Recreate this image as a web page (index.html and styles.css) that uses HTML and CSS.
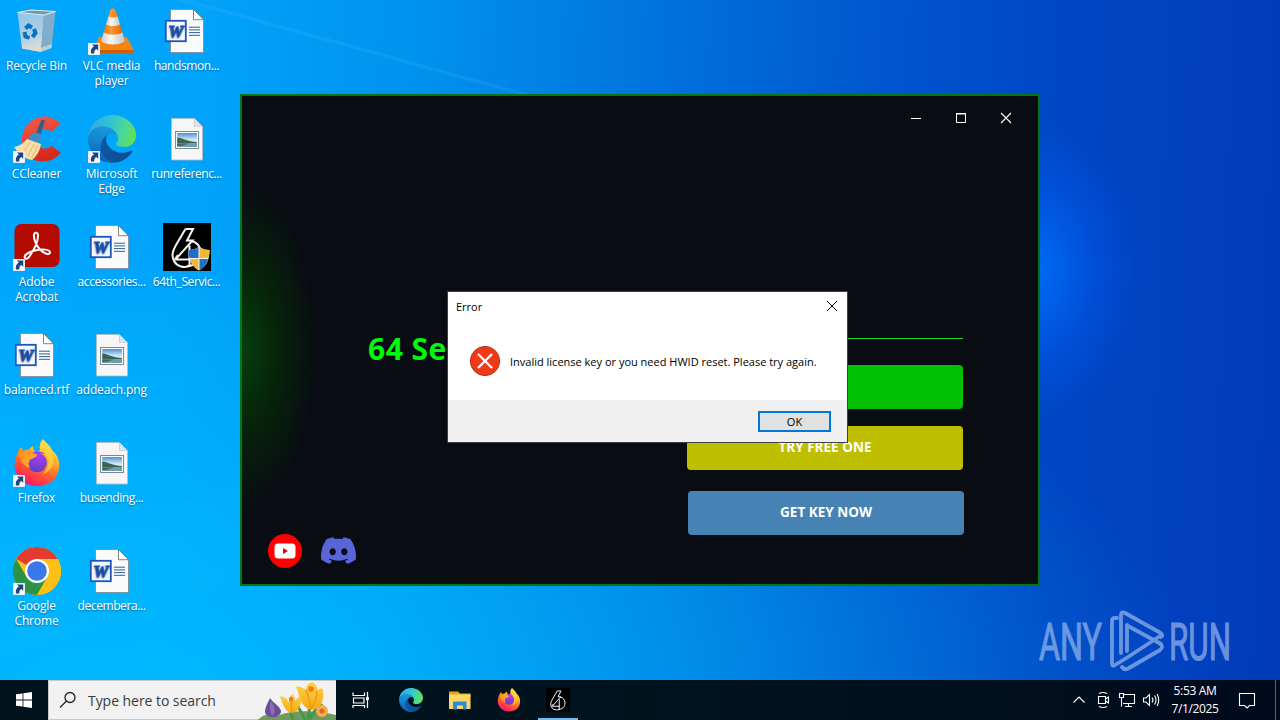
FILE: index.html
```html
<!DOCTYPE html>
<html lang="en">
<head>
    <meta charset="UTF-8">
    <meta name="viewport" content="width=device-width, initial-scale=1.0">
    <title>Desktop</title>
    <link rel="stylesheet" href="styles.css">
</head>
<body>
    <!-- shared icons -->
    <svg class="defs" width="0" height="0">
        <defs>
            <linearGradient id="edgeA" x1="0" y1="0" x2="1" y2="0"><stop offset="0" stop-color="#0c59a4"/><stop offset="1" stop-color="#114a8b"/></linearGradient>
            <linearGradient id="edgeB" x1="0.6" y1="0" x2="0.4" y2="1"><stop offset="0" stop-color="#1b9de2"/><stop offset="0.5" stop-color="#1383d0"/><stop offset="1" stop-color="#0a5cb0"/></linearGradient>
            <linearGradient id="edgeC" x1="0" y1="0.4" x2="1" y2="0.6"><stop offset="0" stop-color="#35a9e3"/><stop offset="0.4" stop-color="#2fc2d6"/><stop offset="0.75" stop-color="#4bd894"/><stop offset="1" stop-color="#66e04e"/></linearGradient>
            <linearGradient id="fox" x1="0.8" y1="0" x2="0.3" y2="1"><stop offset="0" stop-color="#fff44f"/><stop offset="0.35" stop-color="#ffb02e"/><stop offset="0.6" stop-color="#ff6a2e"/><stop offset="0.85" stop-color="#ff2f50"/><stop offset="1" stop-color="#e31587"/></linearGradient>
            <linearGradient id="foxHead" x1="0" y1="0" x2="1" y2="1"><stop offset="0" stop-color="#ff8a16"/><stop offset="1" stop-color="#ffb636"/></linearGradient>
            <radialGradient id="foxGlobe" cx="0.6" cy="0.2" r="0.9"><stop offset="0" stop-color="#a93cf0"/><stop offset="1" stop-color="#5b3fc0"/></radialGradient>
            <linearGradient id="cone" x1="0" y1="0" x2="1" y2="0"><stop offset="0" stop-color="#e56a00"/><stop offset="0.4" stop-color="#ff9a2c"/><stop offset="1" stop-color="#d85f00"/></linearGradient>
            <linearGradient id="coneWhite" x1="0" y1="0" x2="1" y2="0"><stop offset="0" stop-color="#c9c9c9"/><stop offset="0.4" stop-color="#fafafa"/><stop offset="1" stop-color="#c2c2c2"/></linearGradient>
            <linearGradient id="binFront" x1="0" y1="0" x2="0.3" y2="1"><stop offset="0" stop-color="#8fc6ea"/><stop offset="0.6" stop-color="#a9cde3"/><stop offset="1" stop-color="#d5dadd"/></linearGradient>
            <linearGradient id="photo" x1="0" y1="0" x2="0" y2="1"><stop offset="0" stop-color="#4e92d8"/><stop offset="0.5" stop-color="#d5ebf7"/><stop offset="1" stop-color="#a9cfe4"/></linearGradient>
            <linearGradient id="ccRed" x1="0" y1="0" x2="0.3" y2="1"><stop offset="0" stop-color="#f4604b"/><stop offset="1" stop-color="#d42a1e"/></linearGradient>
            <linearGradient id="petal" x1="0" y1="0" x2="0" y2="1"><stop offset="0" stop-color="#ffd24a"/><stop offset="1" stop-color="#f5a911"/></linearGradient>
        </defs>
        <symbol id="arrow" viewBox="0 0 12 12">
            <rect width="12" height="12" fill="#f7f9fb" stroke="#b8c4d0" stroke-width="0.5"/>
            <path d="M4 1.500H10.200V7.800L8.300 6C6.600 7 6.200 8.200 6.300 10.500H3C2.300 7.300 3.500 5 5.900 3.500Z" fill="#1d4580"/>
        </symbol>
        <symbol id="word" viewBox="0 0 48 48">
            <path d="M7.500 2.500H30L40.500 13V45.500H7.500Z" fill="#fbfbfb" stroke="#7d8790" stroke-width="0.8"/>
            <path d="M30.500 2.500V12.700H40.500Z" fill="#fff" stroke="#6c7680" stroke-width="0.9"/>
            <path d="M26 20.200H37M26 22.900H37M26 25.600H37M26 28.300H37" stroke="#2f5d9c" stroke-width="1"/>
            <rect x="2.800" y="13.800" width="20" height="20.400" fill="#f4f8ff" stroke="#1c56b8" stroke-width="1.800"/>
            <text x="12.800" y="30" class="word-letter">W</text>
        </symbol>
        <symbol id="png" viewBox="0 0 48 48">
            <path d="M8.500 3.500H31.500L39.500 11.500V45H8.500Z" fill="#f6f6f6" stroke="#b5bcc2" stroke-width="0.8"/>
            <path d="M31.500 3.500V11.500H39.500Z" fill="#d9e6ee" stroke="#b5bcc2" stroke-width="0.6"/>
            <rect x="12.600" y="16.500" width="23" height="17" fill="#fff" stroke="#6e7b87" stroke-width="0.9"/>
            <rect x="14.200" y="18" width="19.800" height="14" fill="url(#photo)"/>
            <path d="M14.200 22.500C19 23 25 26.500 34 27.200V28.500H14.200Z" fill="#3d6352"/>
            <path d="M14.200 28.500H34V32H14.200Z" fill="#6f9cae"/>
            <path d="M14.200 28.500H26L18 31H14.200Z" fill="#44695f"/>
        </symbol>
        <symbol id="edge" viewBox="0 0 256 256">
            <g transform="translate(-4.63 -4.92)">
                <path fill="url(#edgeA)" d="M235.68 195.46a93.73 93.73 0 01-10.54 4.71 101.87 101.87 0 01-35.9 6.46c-47.32 0-88.54-32.55-88.54-74.32A31.48 31.48 0 01117.13 105c-42.8 1.8-53.8 46.4-53.8 72.53 0 73.88 68.09 81.37 82.76 81.37 7.91 0 19.84-2.3 27-4.56l1.31-.44a128.34 128.34 0 0066.6-52.8 4 4 0 00-5.32-5.64z"/>
                <path fill="url(#edgeB)" d="M110.34 246.34A79.2 79.2 0 0187.6 225a80.72 80.72 0 0129.53-120c3.12-1.47 8.45-4.13 15.54-4a32.35 32.35 0 0125.69 13 31.88 31.88 0 016.36 18.66c0-.21 24.46-79.6-80-79.6-43.9 0-80 41.66-80 78.21a130.15 130.15 0 0012.11 56 128 128 0 00156.38 67.11 75.55 75.55 0 01-62.78-8z"/>
                <path fill="url(#edgeC)" d="M156.94 153.78c-.81 1.05-3.3 2.5-3.3 5.66 0 2.61 1.7 5.12 4.72 7.23 14.38 10 41.49 8.68 41.56 8.68a59.56 59.56 0 0030.27-8.35 61.38 61.38 0 0030.43-52.88c.26-22.41-8-37.31-11.34-43.91C228.09 28.76 182.35 4.92 132.61 4.92a128 128 0 00-128 126.2c.48-36.54 36.8-66.05 80-66.05 3.5 0 23.46.34 42 10.07 16.34 8.58 24.9 18.94 30.85 29.21 6.18 10.67 7.28 24.15 7.28 29.52s-2.74 13.33-7.8 19.91z"/>
            </g>
        </symbol>
        <symbol id="firefox" viewBox="0 0 48 48">
            <path fill="url(#fox)" d="M30 0C33 4 37 6 39 11L42 14C45 18 47 23 46 29C45 40 36 47 24 47C11 47 2 38 1.500 26C1.500 20 4 15 6 11L8 8L10 12C12 11 14 10.500 16 11C17 9 18 8 20 7C20 10 21 12 23 13L27 11C26 7 27 3 30 0Z"/>
            <circle cx="24" cy="23.500" r="9.800" fill="url(#foxGlobe)"/>
            <path fill="url(#foxHead)" d="M6 9C7 12 9 13 12 12.500C14 11 18 11 20 13.500L24.500 15.500C24 18 20 19 17.500 20.500C15.500 22 15 26 17 29C10 27 5 19 6 9Z"/>
            <path fill="#ffd43e" d="M30 1C33 6 38 8 40 15C42 24 38 33 30 35C37 28 37 18 31 14C27 12 27 5 30 1Z" opacity="0.75"/>
            <path fill="#b833e1" d="M19.500 14C22 11.500 28 11.500 32 15C29 14 26 14.500 24.500 15.500Z"/>
        </symbol>
        <symbol id="chrome" viewBox="0 0 48 48">
            <circle cx="24" cy="24" r="24" fill="#fbc116"/>
            <path d="M24 24L3.200 12A24 24 0 0 1 44.800 12H24Z" fill="#e33b2e"/>
            <path d="M3.200 12A24 24 0 0 0 24 48L34.400 30L24 24L13.600 30Z" fill="#2b9246"/>
            <path d="M24 12H44.800A24 24 0 0 1 24 48L34.400 30Z" fill="#fbc116"/>
            <circle cx="24" cy="24" r="12" fill="#fff"/>
            <circle cx="24" cy="24" r="9.800" fill="#3a77e8"/>
        </symbol>
        <symbol id="logo64" viewBox="0 0 48 48">
            <rect width="48" height="48" fill="#000"/>
            <g fill="none" stroke="#f4f4f4" stroke-width="2" stroke-linejoin="miter">
                <path d="M22.500 6H30L24 17.500H29.500L12.500 36.500H26.500V22.500"/>
                <path d="M22.500 6L13 22C9 29 8.500 33 11 38C14 43.500 21 45.500 28 42.500"/>
                <path d="M28 18C34 19 38 24 38 30C38 38 32 43 24 43"/>
                <path d="M26.500 36V43M12 36L15 32"/>
            </g>
        </symbol>
    </svg>

    <div class="desktop">
        <svg class="rays" viewBox="0 0 1280 680">
            <path d="M190 0L530 94H516L176 0Z" fill="#4cc2ff" opacity="0.16"/>
            <path d="M0 545L240 487V584L0 660Z" fill="#19bcff" opacity="0.08"/>
        </svg>

        <div class="icons">
            <div class="icon">
                <svg viewBox="0 0 48 48">
                    <path d="M4.500 5.500L31 8L28 45L9 41.500Z" fill="url(#binFront)"/>
                    <path d="M31 8L42.500 4.500L38.500 41L28 45Z" fill="#82adc9"/>
                    <path d="M4.500 5.500L18 3L42.500 4.500L31 8Z" fill="#6f97b0" stroke="#dcecf5" stroke-width="1.200"/>
                    <path d="M9 38L28.500 40.500L39 37L38.500 41L28 45L9 41.500Z" fill="#dcd8d2" opacity="0.7"/>
                    <g fill="none" stroke="#0b6ec6" stroke-width="4">
                        <path d="M12.500 21.500L15.500 18.500L19 20.500"/>
                        <path d="M21 22L22.500 26L19.500 30"/>
                        <path d="M16.500 31L12.500 29.500L11.500 25"/>
                    </g>
                </svg>
                <span>Recycle Bin</span>
            </div>
            <div class="icon">
                <svg viewBox="0 0 48 48">
                    <path fill="url(#ccRed)" d="M47 9C44 4 37 1.500 31 1.500C18 2.500 9 12 9 25C9 38 18 46.500 30 46.500C38 46.500 44 43 47.500 37.500L38 30.500C36 34 31 34.500 27.500 32C22 29 22 19 27 16C31 13 36 14 38 17Z"/>
                    <path d="M28.500 4.500L32 5.500L27 22L22 21Z" fill="#2e5f8f"/>
                    <path d="M16 23C19 16 25 17 29 20L27 30L14 27Z" fill="#3c8cc8"/>
                    <path d="M14 24L28 29C27 36 23 42 19 45C13 44 6 40 1 32C6 31 11 28 14 24Z" fill="#f7dda6"/>
                    <path d="M17 27L10 38M21 29L15 41M25 30L19 43" stroke="#dcae68" stroke-width="0.800"/>
                </svg>
                <svg class="shortcut"><use href="#arrow"/></svg>
                <span>CCleaner</span>
            </div>
            <div class="icon">
                <svg viewBox="0 0 48 48">
                    <rect x="1.500" y="1" width="45" height="43" rx="7" fill="#b30b00"/>
                    <path d="M12.500 35.500C9.500 33 15 29 22 27.500C29 26 37 26 37 29.500C37 32.500 31 31 26.500 26C22.500 21.500 20.500 15 21 11.500C21.500 9 25 9 25 12.500C25 18 21 26.500 18 31C16 34.500 14 36.500 12.500 35.500Z" fill="none" stroke="#fff" stroke-width="2"/>
                </svg>
                <svg class="shortcut"><use href="#arrow"/></svg>
                <span>Adobe Acrobat</span>
            </div>
            <div class="icon">
                <svg><use href="#word"/></svg>
                <span>balanced.rtf</span>
            </div>
            <div class="icon">
                <svg><use href="#firefox"/></svg>
                <svg class="shortcut"><use href="#arrow"/></svg>
                <span>Firefox</span>
            </div>
            <div class="icon">
                <svg><use href="#chrome"/></svg>
                <svg class="shortcut"><use href="#arrow"/></svg>
                <span>Google Chrome</span>
            </div>
            <div class="icon">
                <svg viewBox="0 0 48 48">
                    <path d="M11 30H39L45.500 43C45.500 45 45 46 43 46H8C6 46 5 45 5.500 43Z" fill="#f58410"/>
                    <path d="M5.500 43H45.500C45.500 45 45 46 43 46H8C6 46 5 45 5.500 43Z" fill="#cf5c00"/>
                    <path d="M22.500 2.500C23.500 1 26.500 1 27.500 2.500L37 34C34 39 16 39 13 34Z" fill="url(#cone)"/>
                    <path d="M20.500 9.500C23 11 27 11 29.700 9.500L32 17.500C28 19.500 22 19.500 18 17.500Z" fill="url(#coneWhite)"/>
                    <path d="M15.700 25.500C21 28.500 30 28.500 34.500 25.500L37 34C33 38.500 17 38.500 13 34Z" fill="url(#coneWhite)"/>
                </svg>
                <svg class="shortcut"><use href="#arrow"/></svg>
                <span>VLC media player</span>
            </div>
            <div class="icon">
                <svg><use href="#edge"/></svg>
                <svg class="shortcut"><use href="#arrow"/></svg>
                <span>Microsoft Edge</span>
            </div>
            <div class="icon">
                <svg><use href="#word"/></svg>
                <span class="long">accessories...</span>
            </div>
            <div class="icon">
                <svg><use href="#png"/></svg>
                <span>addeach.png</span>
            </div>
            <div class="icon">
                <svg><use href="#png"/></svg>
                <span class="long">busending...</span>
            </div>
            <div class="icon">
                <svg><use href="#word"/></svg>
                <span class="long">decembera...</span>
            </div>
            <div class="icon">
                <svg><use href="#word"/></svg>
                <span class="long">handsmon...</span>
            </div>
            <div class="icon">
                <svg><use href="#png"/></svg>
                <span class="long">runreferenc...</span>
            </div>
            <div class="icon">
                <svg viewBox="0 0 48 48">
                    <use href="#logo64"/>
                    <path d="M25.500 27C30 27 33 26 36 23.500C39 26 42 27 46.500 27C46.500 36 44 43 36 47.500C28 43 25.500 36 25.500 27Z" fill="#f4f4f4"/>
                    <path d="M25.500 27C30 27 33 26 35.500 24V35H26.500C25.700 32 25.500 30 25.500 27ZM36.500 36H45C43.500 41 41 44.500 36.500 47Z" fill="#1d6fc9"/>
                    <path d="M36.500 24C39 26 42 27 46.500 27C46.500 30 46.200 32 45.500 35H36.500ZM27 36H35.500V47C31 44.500 28.500 41 27 36Z" fill="#f5b632"/>
                </svg>
                <span class="long">64th_Servic...</span>
            </div>
        </div>

        <div class="app">
            <div class="app-bar">
                <svg viewBox="0 0 12 12"><path d="M1 6.500H11" stroke="#fff"/></svg>
                <svg viewBox="0 0 12 12"><path d="M1.500 2H10.500V10.500H1.500Z" fill="none" stroke="#fff"/><path d="M1 1.500H11" stroke="#fff"/></svg>
                <svg viewBox="0 0 12 12"><path d="M1 1L11 11M11 1L1 11" stroke="#fff" stroke-width="1.100"/></svg>
            </div>
            <div class="app-main">
                <h1>64 Services</h1>
                <form class="login">
                    <div class="key-field"></div>
                    <button type="button" class="btn green">ACTIVE</button>
                    <button type="button" class="btn yellow">TRY FREE ONE</button>
                    <button type="button" class="btn blue">GET KEY NOW</button>
                </form>
            </div>
            <div class="social">
                <svg class="youtube" viewBox="0 0 34 34"><circle cx="17" cy="17" r="17" fill="#f00"/><rect x="6.500" y="9.500" width="21" height="15" rx="3.500" fill="#fff"/><path d="M15 14L20 17L15 20Z" fill="#e60000"/></svg>
                <svg class="discord" viewBox="0 2.850 24 18.300"><path fill="#5865d9" d="M20.317 4.3698a19.7913 19.7913 0 00-4.8851-1.5152.0741.0741 0 00-.0785.0371c-.211.3753-.4447.8648-.6083 1.2495-1.8447-.2762-3.68-.2762-5.4868 0-.1636-.3933-.4058-.8742-.6177-1.2495a.077.077 0 00-.0785-.037 19.7363 19.7363 0 00-4.8852 1.515.0699.0699 0 00-.0321.0277C.5334 9.0458-.319 13.5799.0992 18.0578a.0824.0824 0 00.0312.0561c2.0528 1.5076 4.0413 2.4228 5.9929 3.0294a.0777.0777 0 00.0842-.0276c.4616-.6304.8731-1.2952 1.226-1.9942a.076.076 0 00-.0416-.1057c-.6528-.2476-1.2743-.5495-1.8722-.8923a.077.077 0 01-.0076-.1277c.1258-.0943.2517-.1923.3718-.2914a.0743.0743 0 01.0776-.0105c3.9278 1.7933 8.18 1.7933 12.0614 0a.0739.0739 0 01.0785.0095c.1202.099.246.1981.3728.2924a.077.077 0 01-.0066.1276 12.2986 12.2986 0 01-1.873.8914.0766.0766 0 00-.0407.1067c.3604.698.7719 1.3628 1.225 1.9932a.076.076 0 00.0842.0286c1.961-.6067 3.9495-1.5219 6.0023-3.0294a.077.077 0 00.0313-.0552c.5004-5.177-.8382-9.6739-3.5485-13.6604a.061.061 0 00-.0312-.0286zM8.02 15.3312c-1.1825 0-2.1569-1.0857-2.1569-2.419 0-1.3332.9555-2.4189 2.157-2.4189 1.2108 0 2.1757 1.0952 2.1568 2.419 0 1.3332-.9555 2.4189-2.1569 2.4189zm7.9748 0c-1.1825 0-2.1569-1.0857-2.1569-2.419 0-1.3332.9554-2.4189 2.1569-2.4189 1.2108 0 2.1757 1.0952 2.1568 2.419 0 1.3332-.946 2.4189-2.1568 2.4189Z"/></svg>
            </div>
        </div>

        <div class="dialog">
            <div class="dialog-title">
                <span>Error</span>
                <svg viewBox="0 0 12 12"><path d="M1 1L11 11M11 1L1 11" stroke="#000"/></svg>
            </div>
            <div class="dialog-body">
                <svg viewBox="0 0 32 32"><circle cx="16" cy="16" r="14.600" fill="#f03a17" stroke="#b92a10" stroke-width="1"/><path d="M9 9L23 23M23 9L9 23" stroke="#fff" stroke-width="2.300"/></svg>
                <p>Invalid license key or you need HWID reset. Please try again.</p>
            </div>
            <div class="dialog-foot">
                <button type="button">OK</button>
            </div>
        </div>

        <svg class="watermark" viewBox="0 0 200 64">
            <text x="0" y="50.500" textLength="63" lengthAdjust="spacingAndGlyphs">ANY</text>
            <g fill="none" stroke="#a5bff0" stroke-width="3.800" stroke-linejoin="round" stroke-linecap="round">
                <path d="M78 9H76Q73 9 73 12V54Q73 58 76 56L89 48L121 27"/>
                <path d="M82 44V6Q82 2 86 4L120 23Q125 26 122 28"/>
                <path d="M88 16V42M89 17L122 35"/>
                <path d="M83 58Q86 62 90 59L121 41Q125 38 121 35"/>
            </g>
            <text x="130" y="50.500" textLength="62" lengthAdjust="spacingAndGlyphs">RUN</text>
        </svg>
    </div>

    <div class="taskbar">
        <div class="start">
            <svg viewBox="0 0 16 16"><path d="M0 2.300L6.600 1.400V7.600H0ZM7.400 1.300L16 0V7.600H7.400ZM0 8.400H6.600V14.600L0 13.700ZM7.400 8.400H16V16L7.400 14.700Z" fill="#fff"/></svg>
        </div>
        <div class="search">
            <svg class="lens" viewBox="0 0 18 18"><circle cx="11" cy="6.500" r="5" fill="none" stroke="#222" stroke-width="1.300"/><path d="M7.500 10L1 16.500" stroke="#222" stroke-width="1.300"/></svg>
            <span>Type here to search</span>
            <svg class="flowers" viewBox="0 0 80 39">
                <path d="M2 39C8 32 14 33 22 35C34 29 58 29 80 34V39Z" fill="#6f9a5c"/>
                <path d="M37 39C35 31 34 28 36 23M52 39C54 30 53 24 54 20M49 39C46 31 43 28 41 24M54 38C58 30 61 26 67 24" fill="none" stroke="#3f9a4d" stroke-width="3"/>
                <path d="M9 31C9 26 12 22 14 17C17 22 24 25 25 30C25 38 10 38 9 31Z" fill="#6d4d9a"/>
                <path d="M15 20C13 24 14 31 16 35C20 31 19 25 15 20Z" fill="#8d6cba"/>
                <path d="M24 15C29 16 31 18 33 21C33 17 34 15 37 13C39 16 39 18 39 20C42 16 44 15 46 15C45 24 43 31 36 32C29 31 27 24 24 15Z" fill="url(#petal)"/>
                <path d="M40 5C45 6 48 7 50 9C50 4 53 2 56 1C60 3 62 6 61 10C63 7 65 7 67 8C68 20 66 28 55 29C46 27 44 17 40 5Z" fill="url(#petal)"/>
                <path d="M50 9C53 15 54 21 55 28C59 22 61 16 61 10M35 18L36 31" fill="none" stroke="#e8950c" stroke-width="1.200"/>
                <circle cx="55" cy="8" r="2.800" fill="#ef7b18"/><circle cx="35" cy="18" r="2.200" fill="#ef7b18"/>
                <circle cx="66" cy="30" r="6" fill="#f2ad4d"/><circle cx="66" cy="30" r="2.500" fill="#dd6a23"/>
            </svg>
        </div>
        <div class="task view"><svg viewBox="0 0 24 24"><path d="M4 4.500V7.500H15.500V4.500M4 20V17.500H15.500V20M4.500 10H15V15H4.500ZM18.500 4V20" fill="none" stroke="#fff" stroke-width="1.200"/><path d="M17 9H20V12H17Z" fill="#fff"/></svg></div>
        <div class="task"><svg><use href="#edge"/></svg></div>
        <div class="task"><svg viewBox="0 0 24 24"><path d="M1 3.500H10L12 5.500H22.500V9H1Z" fill="#e8a317"/><path d="M1 6.500H22.500V21H1Z" fill="#ffd766"/><path d="M5 21.500V13.500H18.500V21.500H15V17.500H9V21.500Z" fill="#2f8bd8"/></svg></div>
        <div class="task"><svg><use href="#firefox"/></svg></div>
        <div class="task active"><svg><use href="#logo64"/></svg></div>

        <div class="tray">
            <svg viewBox="0 0 24 24"><path d="M6.500 14.500L12 9L17.500 14.500" fill="none" stroke="#fff" stroke-width="1.200"/></svg>
            <svg viewBox="0 0 24 24"><path d="M7.500 8.500H14.500V15.500H7.500ZM14.500 11L17.500 9V15L14.500 13M8 5.500Q12 3.500 16 5.500M8 18.500Q12 20.500 16 18.500" fill="none" stroke="#fff" stroke-width="1.100"/></svg>
            <svg viewBox="0 0 24 24"><path d="M8.500 6.500H19.500V15.500H8M13.500 15.500V18.500M10 18.500H17M4.500 5.500H8.500V9.500H4.500ZM6.500 9.500V18.500" fill="none" stroke="#fff" stroke-width="1.100"/></svg>
            <svg viewBox="0 0 24 24"><path d="M4.500 10H7L10.500 6.500V17.500L7 14H4.500ZM13 9.500Q15 12 13 14.500M15.500 7.500Q18.500 12 15.500 16.500M18 6Q21.500 12 18 18" fill="none" stroke="#fff" stroke-width="1.100"/></svg>
            <div class="clock"><span>5:53 AM</span><span>7/1/2025</span></div>
            <svg class="notes" viewBox="0 0 24 24"><path d="M4.500 5.500H19.500V17.500H14.500L12 20L9.500 17.500H4.500Z" fill="none" stroke="#fff" stroke-width="1.100"/></svg>
            <div class="peek"></div>
        </div>
    </div>
</body>
</html>
```

FILE: styles.css
```css
* {
    box-sizing: border-box;
}
body {
    margin: 0;
    width: 1280px;
    height: 720px;
    overflow: hidden;
    display: flex;
    flex-direction: column;
    font-family: "Open Sans", "Noto Sans", sans-serif;
    font-size: 12px;
}
svg {
    display: block;
}
.defs {
    position: absolute;
}
.word-letter {
    font: italic bold 17px "Liberation Serif", serif;
    fill: #1c56b8;
    stroke: #1c56b8;
    stroke-width: 1;
    text-anchor: middle;
}

/* desktop */
.desktop {
    position: relative;
    height: 680px;
    background:
        radial-gradient(ellipse 110px 150px at 1030px 270px, rgba(0, 112, 255, 0.9), rgba(0, 100, 255, 0.3) 60%, rgba(0, 90, 240, 0) 100%),
        radial-gradient(ellipse 1050px 460px at 150px 700px, rgba(0, 188, 255, 0.85), rgba(0, 176, 255, 0) 100%),
        linear-gradient(92deg, #00a6fd 0%, #00a4fb 15%, #0092ee 32%, #0074de 50%, #0056ce 68%, #0046c4 82%, #003cba 100%);
}
.rays {
    position: absolute;
    inset: 0;
}
.icons {
    display: grid;
    grid-template-rows: repeat(6, 108px);
    grid-auto-columns: 75px;
    grid-auto-flow: column;
    width: 225px;
    margin-left: -1px;
    padding-top: 7px;
}
.icon {
    position: relative;
    display: flex;
    flex-direction: column;
    align-items: center;
    gap: 3px;
    color: #fff;
    line-height: 15px;
    text-align: center;
    text-shadow: 0 1px 2px rgba(0, 0, 0, 0.4);
    letter-spacing: -0.15px;
}
.icon .long {
    letter-spacing: -0.4px;
}
.icon svg {
    width: 48px;
    height: 48px;
}
.icon .shortcut {
    position: absolute;
    left: 14px;
    top: 36px;
    width: 12px;
    height: 12px;
}

/* app window */
.app {
    position: absolute;
    left: 240px;
    top: 94px;
    width: 800px;
    height: 492px;
    display: flex;
    flex-direction: column;
    border: 2px solid #04780e;
    background: radial-gradient(ellipse 75px 165px at 0 252px, #053f0e, #062509 45%, rgba(9, 12, 19, 0) 100%) #090c13;
}
.app-bar {
    display: flex;
    justify-content: flex-end;
    gap: 33px;
    padding: 16px 26px 0 0;
}
.app-bar svg {
    width: 12px;
    height: 12px;
}
.app-main {
    display: flex;
    justify-content: space-between;
    height: 410px;
    padding: 204px 75px 0 126px;
}
.app h1 {
    margin: 0;
    color: #00fa0c;
    font-size: 30px;
    line-height: 41px;
    letter-spacing: 0.5px;
}
.login {
    width: 276px;
}
.key-field {
    height: 11px;
    border-bottom: 1px solid #25d325;
    margin-bottom: 26px;
}
.btn {
    display: block;
    width: 276px;
    height: 44px;
    padding: 0 0 2px;
    border: none;
    border-radius: 4px;
    color: #fff;
    font: bold 13.5px "Open Sans", sans-serif;
}
.green {
    background-color: #02c006;
    margin-bottom: 17px;
}
.yellow {
    background-color: #bfbf02;
    margin-bottom: 21px;
}
.blue {
    background-color: #4682b4;
    margin-left: 1px;
}
.social {
    display: flex;
    align-items: center;
    gap: 19px;
    padding-left: 26px;
}
.youtube {
    width: 34px;
    height: 34px;
}
.discord {
    width: 35px;
    height: 27px;
    margin-bottom: 2px;
}

/* error dialog */
.dialog {
    position: absolute;
    left: 447px;
    top: 291px;
    width: 401px;
    height: 152px;
    border: 1px solid #3c4048;
    background-color: #fff;
    color: #000;
    font-size: 11px;
}
.dialog-title {
    display: flex;
    justify-content: space-between;
    align-items: center;
    height: 29px;
    padding: 0 9px 0 8px;
}
.dialog-title svg {
    width: 12px;
    height: 12px;
    margin-bottom: 1px;
}
.dialog-body {
    display: flex;
    align-items: center;
    gap: 9px;
    height: 79px;
    padding-left: 21px;
}
.dialog-body svg {
    width: 32px;
    height: 32px;
}
.dialog-body p {
    margin: 2px 0 0;
    white-space: nowrap;
}
.dialog-foot {
    display: flex;
    justify-content: flex-end;
    height: 42px;
    padding: 11px 16px 0 0;
    background-color: #f0f0f0;
}
.dialog-foot button {
    width: 73px;
    height: 21px;
    padding: 0;
    border: 2px solid #0078d7;
    background-color: #e1e1e1;
    font: 11px "Open Sans", sans-serif;
}

.watermark {
    position: absolute;
    left: 1039px;
    top: 609px;
    width: 200px;
    height: 64px;
    opacity: 0.65;
}
.watermark text {
    font: 52px Roboto, sans-serif;
    fill: #a5bff0;
    stroke: #a5bff0;
    stroke-width: 1.2;
}

/* taskbar */
.taskbar {
    display: flex;
    height: 40px;
    background: linear-gradient(90deg, #00131c, #00141f 55%, #000a1d);
}
.start {
    display: flex;
    align-items: center;
    justify-content: center;
    width: 48px;
}
.start svg {
    width: 16px;
    height: 16px;
}
.search {
    display: flex;
    align-items: center;
    width: 288px;
    border: 1px solid #c8c8c8;
    border-right: none;
    background-color: #f2f2f2;
    color: #3a3a3a;
    font-size: 14px;
}
.lens {
    width: 18px;
    height: 18px;
    margin: 0 11px 0 10px;
}
.search span {
    flex: 1;
    white-space: nowrap;
    letter-spacing: -0.05px;
}
.flowers {
    width: 80px;
    height: 39px;
}
.task {
    display: flex;
    align-items: center;
    justify-content: center;
    width: 49px;
}
.task svg {
    width: 24px;
    height: 24px;
}
.task.view {
    margin-right: 1px;
}
.task.active {
    box-shadow: inset 0 -2px #76b9ed;
    width: 40px;
    margin-left: 5px;
}
.tray {
    display: flex;
    align-items: center;
    margin-left: auto;
    color: #fff;
}
.tray svg {
    width: 24px;
    height: 24px;
}
.clock {
    display: flex;
    flex-direction: column;
    align-items: center;
    width: 64px;
    line-height: 18px;
    letter-spacing: -0.35px;
}
.tray .notes {
    margin: 0 16px 0 8px;
}
.peek {
    width: 5px;
    height: 40px;
    border-left: 1px solid #5b6472;
}
```
